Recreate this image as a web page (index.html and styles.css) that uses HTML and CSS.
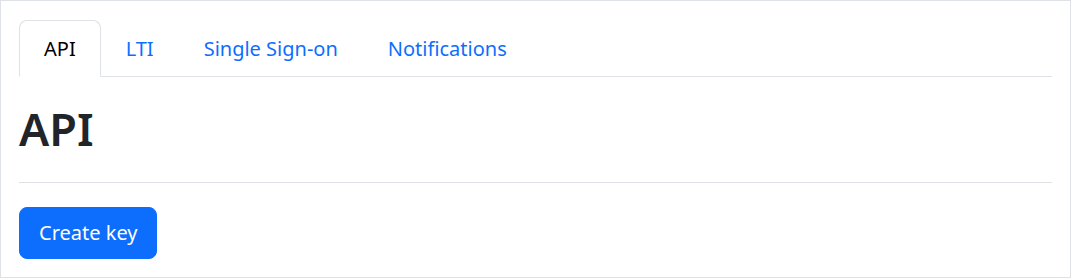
FILE: index.html
```html
<!DOCTYPE html>
<html lang="en">
<head>
<meta charset="utf-8">
<title>API</title>
<link rel="stylesheet" href="styles.css">
</head>
<body>
<div class="frame">
  <ul class="tabs">
    <li class="tab"><a class="tab-link active" href="#">API</a></li>
    <li class="tab"><a class="tab-link" href="#">LTI</a></li>
    <li class="tab"><a class="tab-link" href="#">Single Sign-on</a></li>
    <li class="tab"><a class="tab-link" href="#">Notifications</a></li>
  </ul>
  <h1 class="title">API</h1>
  <hr class="rule">
  <button class="btn-primary" type="button">Create key</button>
</div>
</body>
</html>
```
FILE: styles.css
```css
* { box-sizing: border-box; }
html, body { margin: 0; padding: 0; background: #fff; }
body {
  font-family: "Noto Sans", "Open Sans", sans-serif;
  color: #212529;
  width: 1071px;
  height: 278px;
}
.frame {
  width: 1071px;
  height: 278px;
  border: 1px solid #dee2e6;
  padding: 19px 18px 18px;
}
.tabs {
  list-style: none;
  margin: 0;
  padding: 0;
  display: flex;
  border-bottom: 1px solid #dee2e6;
}
.tab { margin-bottom: -1px; }
.tab-link {
  display: block;
  font-size: 20px;
  line-height: 30px;
  padding: 13px 24px 12px;
  border: 1px solid transparent;
  border-top-left-radius: 8px;
  border-top-right-radius: 8px;
  color: #0d6efd;
  text-decoration: none;
}
.tab-link.active {
  color: #000;
  background: #fff;
  border-color: #dee2e6 #dee2e6 #fff;
}
.title {
  margin: 24px 0 0;
  font-size: 45px;
  line-height: 56px;
  font-weight: 600;
  color: #212529;
}
.rule {
  margin: 25px 0 0;
  border: 0;
  border-top: 1px solid #dee2e6;
  height: 0;
}
.btn-primary {
  margin-top: 24px;
  display: inline-block;
  font-family: inherit;
  font-size: 20px;
  line-height: 30px;
  padding: 10px 19px;
  border: 1px solid #0d6efd;
  border-radius: 8px;
  background: #0d6efd;
  color: #fff;
  cursor: pointer;
}
```
